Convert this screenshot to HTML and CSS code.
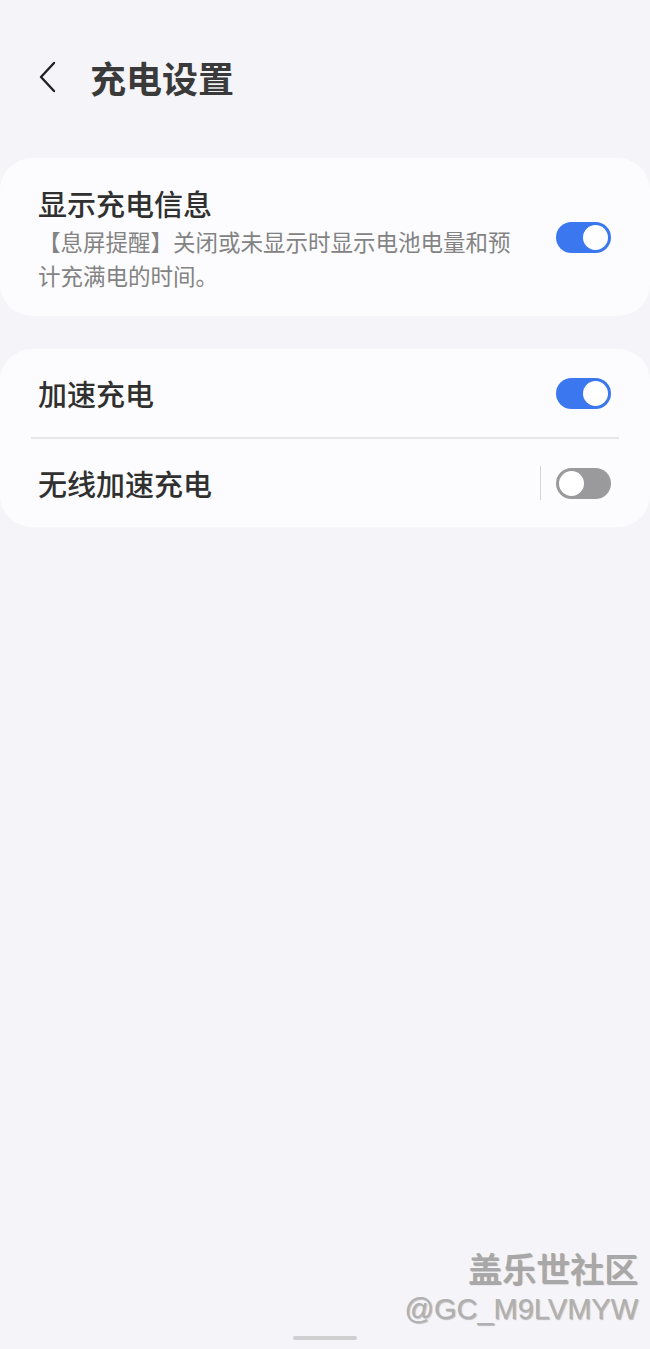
FILE: index.html
```html
<!DOCTYPE html>
<html lang="zh-CN">
<head>
    <meta charset="UTF-8">
    <meta name="viewport" content="width=device-width, initial-scale=1.0">
    <title>充电设置</title>
    <link rel="stylesheet" href="styles.css">
</head>
<body>
    <header class="topbar">
        <svg class="back" width="20" height="32" viewBox="0 0 20 32">
            <path d="M16 2 L3 16 L16 30" fill="none" stroke="#222" stroke-width="2.4" stroke-linecap="round" stroke-linejoin="round"/>
        </svg>
        <h1>充电设置</h1>
    </header>

    <section class="card">
        <div class="row row-tall">
            <div class="text">
                <div class="title">显示充电信息</div>
                <div class="sub">【息屏提醒】关闭或未显示时显示电池电量和预计充满电的时间。</div>
            </div>
            <span class="switch on"></span>
        </div>
    </section>

    <section class="card">
        <div class="row">
            <div class="title">加速充电</div>
            <span class="switch on"></span>
        </div>
        <div class="divider"></div>
        <div class="row">
            <div class="title">无线加速充电</div>
            <div class="ctrl">
                <span class="vbar"></span>
                <span class="switch"></span>
            </div>
        </div>
    </section>

    <div class="watermark">
        <div class="wm-brand">盖乐世社区</div>
        <div class="wm-user">@GC_M9LVMYW</div>
    </div>
    <div class="handle"></div>
</body>
</html>
```

FILE: styles.css
```css
html, body {
    margin: 0;
    padding: 0;
}
body {
    width: 650px;
    height: 1349px;
    background: #f5f5f9;
    font-family: "Noto Sans CJK SC", "Noto Sans", sans-serif;
    color: #333;
    position: relative;
    overflow: hidden;
}
.topbar {
    display: flex;
    align-items: center;
    height: 78px;
    padding: 38px 0 0 38px;
    box-sizing: content-box;
    margin-bottom: 42px;
}
.back {
    margin-right: 32px;
}
h1 {
    margin: 0;
    font-size: 36px;
    font-weight: 700;
    color: #3a3a3a;
}
.card {
    background: #fcfcfe;
    border-radius: 32px;
    margin-bottom: 33px;
    padding: 0 38px;
}
.row {
    display: flex;
    align-items: center;
    justify-content: space-between;
    height: 88px;
}
.row-tall {
    height: 158px;
}
.text {
    width: 480px;
}
.title {
    font-size: 29px;
    font-weight: 500;
    color: #303030;
}
.sub {
    font-size: 22.5px;
    line-height: 34px;
    color: #838383;
    margin-top: 0;
}
.divider {
    height: 2px;
    background: #e6e6ea;
    margin: 0 -7px;
}
.ctrl {
    display: flex;
    align-items: center;
}
.vbar {
    width: 1px;
    height: 34px;
    background: #d5d5d8;
    margin-right: 15px;
}
.switch {
    position: relative;
    width: 55px;
    height: 31px;
    border-radius: 16px;
    background: #9a9a9d;
    box-sizing: border-box;
    margin-right: 1px;
}
.switch::after {
    content: "";
    position: absolute;
    top: 3px;
    left: 3px;
    width: 25px;
    height: 25px;
    border-radius: 50%;
    background: #fff;
}
.switch.on {
    background: #3b78f0;
}
.switch.on::after {
    left: auto;
    right: 3px;
}
.watermark {
    position: absolute;
    right: 12px;
    bottom: 20px;
    text-align: right;
    color: #a8a8a8;
    text-shadow: 1px 1px 1px rgba(0,0,0,0.35);
}
.wm-brand {
    font-size: 34px;
    font-weight: 500;
    line-height: 42px;
}
.wm-user {
    font-family: "Liberation Sans", sans-serif;
    font-size: 29px;
    line-height: 40px;
    color: #b0b0b0;
    text-shadow: 1px 1px 1px rgba(0,0,0,0.25);
}
.handle {
    position: absolute;
    left: 293px;
    bottom: 9px;
    width: 64px;
    height: 4px;
    border-radius: 2px;
    background: #cfcfd2;
}
```
